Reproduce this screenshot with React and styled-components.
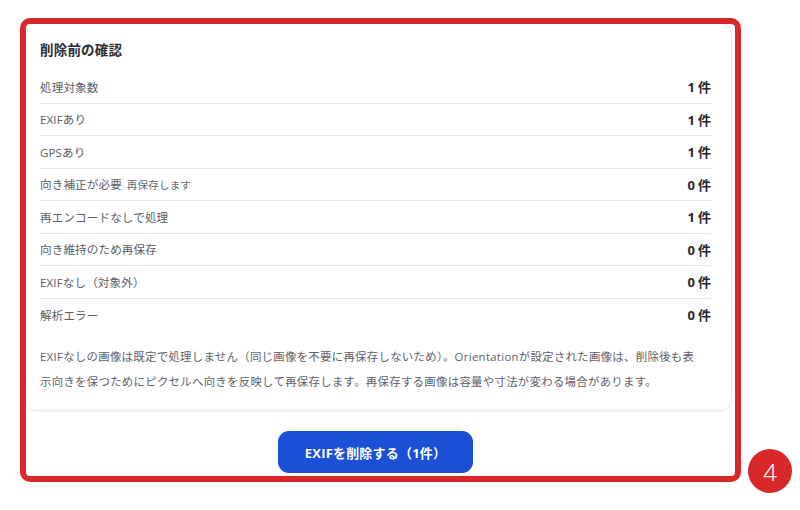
import React from "react";
import styled, { createGlobalStyle } from "styled-components";

const GlobalStyle = createGlobalStyle`
  html, body {
    margin: 0;
    padding: 0;
    background: #ffffff;
  }
  body {
    font-family: "Open Sans", "Noto Sans CJK JP", sans-serif;
    -webkit-font-smoothing: antialiased;
  }
`;

const Stage = styled.div`
  position: relative;
  width: 800px;
  height: 510px;
  padding: 18px 0 0 20px;
  box-sizing: border-box;
`;

const Highlight = styled.section`
  width: 721px;
  height: 464px;
  box-sizing: border-box;
  border: 6px solid #d8282a;
  border-radius: 10px;
  overflow: hidden;
  display: flex;
  flex-direction: column;
  background: #ffffff;
`;

const Card = styled.div`
  margin: -2px 3px 0 -2px;
  padding: 17px 20px 16px 15px;
  border: 1px solid #e7e7eb;
  border-radius: 12px;
  background: #ffffff;
  box-shadow: 0 1px 3px rgba(0, 0, 0, 0.05);
`;

const Title = styled.h2`
  margin: 0 0 11px;
  font-size: 13.5px;
  line-height: 20px;
  font-weight: 700;
  color: #2a2d34;
  letter-spacing: 0.2px;
`;

const List = styled.ul`
  list-style: none;
  margin: 0;
  padding: 0;
`;

const Row = styled.li`
  display: flex;
  align-items: center;
  justify-content: space-between;
  height: 32.5px;
  box-sizing: border-box;
  border-bottom: ${(p) => (p.$last ? "none" : "1px solid #e6e6e8")};
`;

const Label = styled.span`
  font-size: 11.6px;
  color: #5a5d64;
  letter-spacing: 0.1px;
`;

const Note = styled.span`
  margin-left: 5px;
  font-size: 10.6px;
  color: #6a6d74;
`;

const Count = styled.span`
  font-size: 13px;
  font-weight: 700;
  color: #26282e;
  display: flex;
  align-items: baseline;
  gap: 3px;
`;

const Help = styled.p`
  margin: 13px 0 0;
  padding-right: 8px;
  font-size: 11.4px;
  line-height: 25px;
  color: #5e6168;
  letter-spacing: 0.3px;
`;

const Footer = styled.div`
  display: flex;
  justify-content: center;
  padding: 20px 10px 0 0;
`;

const PrimaryButton = styled.button`
  width: 195px;
  height: 42px;
  border: none;
  border-radius: 11px;
  background: #1b4fd6;
  color: #ffffff;
  font-family: inherit;
  font-size: 13px;
  font-weight: 700;
  letter-spacing: 0.2px;
  cursor: pointer;
`;

const StepBadge = styled.div`
  position: absolute;
  left: 748px;
  top: 449px;
  width: 44px;
  height: 44px;
  border-radius: 50%;
  background: #d8282a;
  color: #ffffff;
  display: flex;
  align-items: center;
  justify-content: center;
  font-family: "Noto Sans", sans-serif;
  font-size: 24px;
  font-weight: 300;
`;

const rows = [
  { label: "処理対象数", count: 1 },
  { label: "EXIFあり", count: 1 },
  { label: "GPSあり", count: 1 },
  { label: "向き補正が必要", note: "再保存します", count: 0 },
  { label: "再エンコードなしで処理", count: 1 },
  { label: "向き維持のため再保存", count: 0 },
  { label: "EXIFなし（対象外）", count: 0 },
  { label: "解析エラー", count: 0 },
];

export default function App() {
  return (
    <>
      <GlobalStyle />
      <Stage>
        <Highlight>
          <Card>
            <Title>削除前の確認</Title>
            <List>
              {rows.map((r, i) => (
                <Row key={r.label} $last={i === rows.length - 1}>
                  <Label>
                    {r.label}
                    {r.note && <Note>{r.note}</Note>}
                  </Label>
                  <Count>
                    <span>{r.count}</span>
                    <span>件</span>
                  </Count>
                </Row>
              ))}
            </List>
            <Help>
              EXIFなしの画像は既定で処理しません（同じ画像を不要に再保存しないため）。Orientationが設定された画像は、削除後も表示向きを保つためにピクセルへ向きを反映して再保存します。再保存する画像は容量や寸法が変わる場合があります。
            </Help>
          </Card>
          <Footer>
            <PrimaryButton>EXIFを削除する（1件）</PrimaryButton>
          </Footer>
        </Highlight>
        <StepBadge>4</StepBadge>
      </Stage>
    </>
  );
}
